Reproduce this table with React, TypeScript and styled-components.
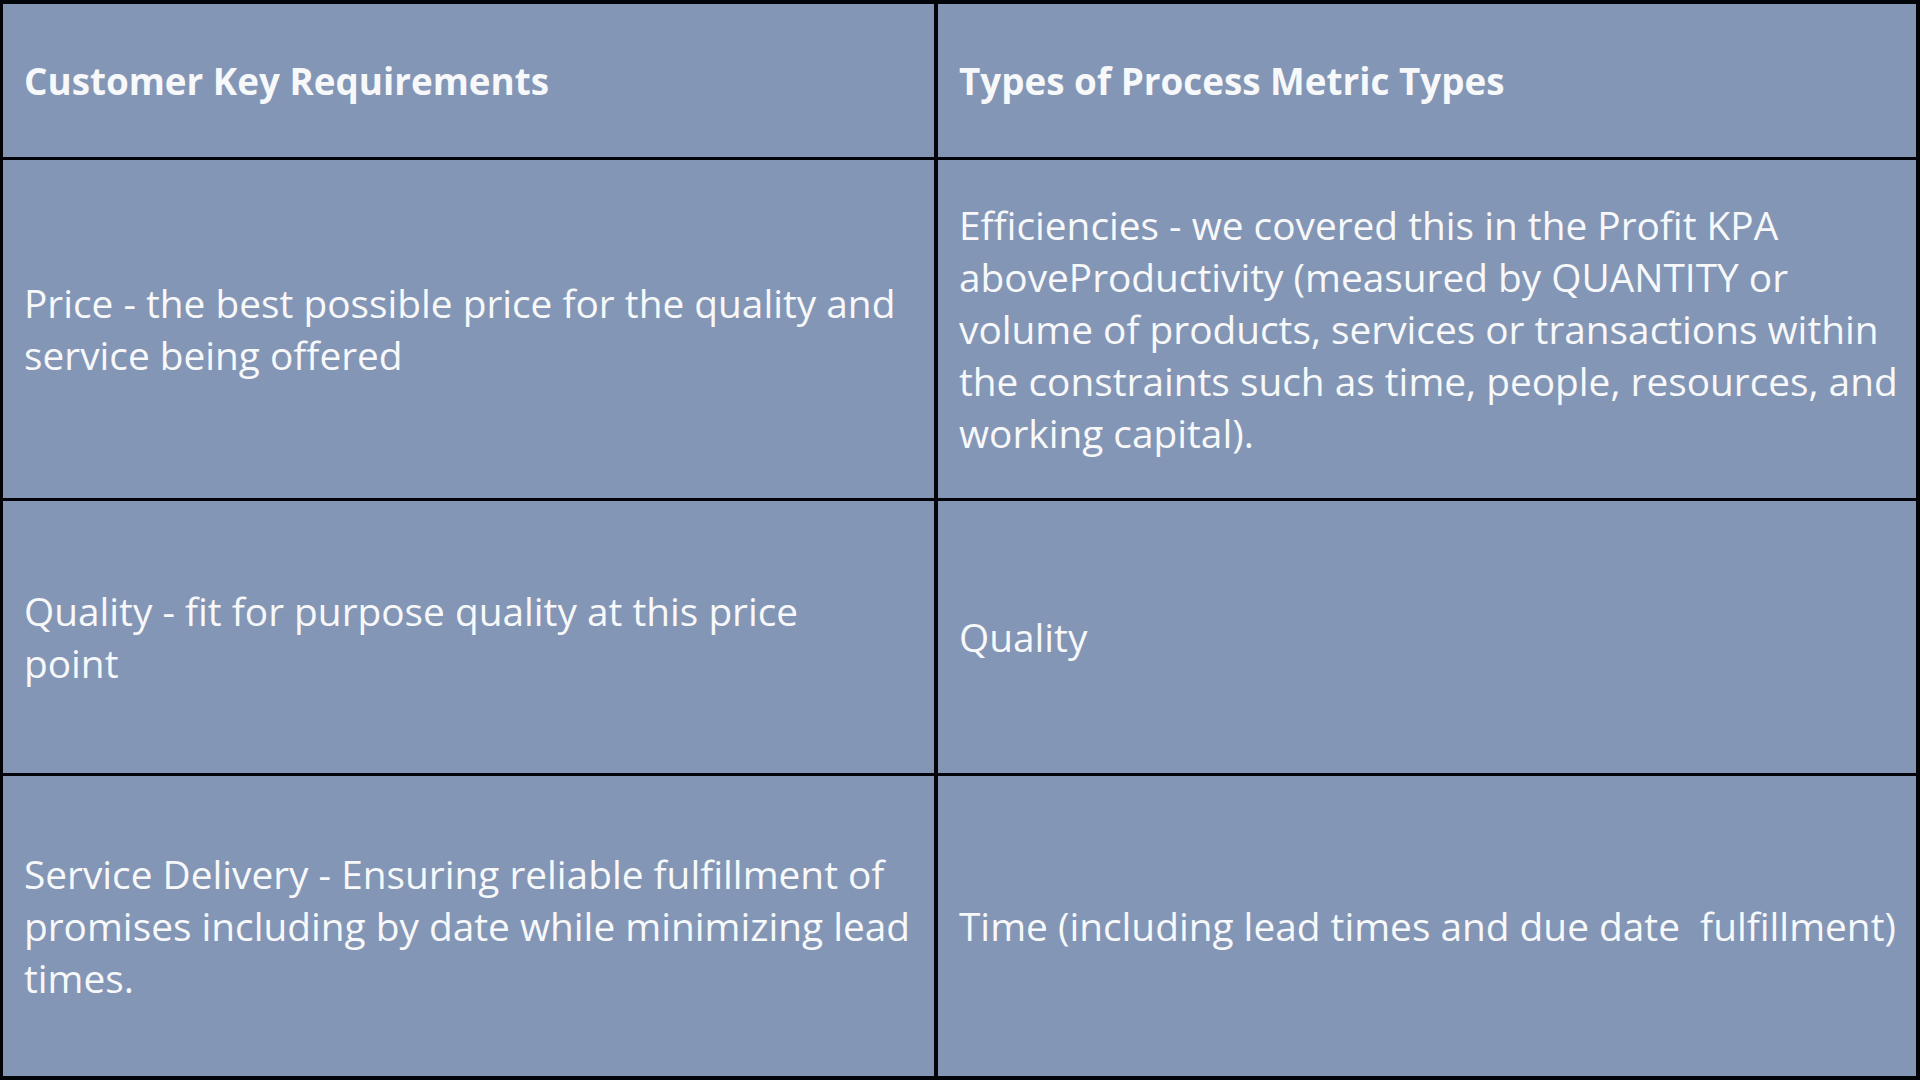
import styled, { createGlobalStyle } from "styled-components";

const GlobalStyle = createGlobalStyle`
  html, body {
    margin: 0;
    padding: 0;
    background: #000;
  }
  * {
    box-sizing: border-box;
  }
`;

const Table = styled.div`
  width: 1920px;
  height: 1080px;
  background-color: #020409;
  padding: 4px 4px 4px 3px;
  display: grid;
  grid-template-columns: 931px 1fr;
  grid-template-rows: 153px 338px 272px 1fr;
  gap: 3px 4px;
`;

const Cell = styled.div<{ $head?: boolean }>`
  background-color: #8496b5;
  color: #f7f8fa;
  display: flex;
  align-items: center;
  padding: 0 10px 0 21px;
  font-family: "Open Sans", "Noto Sans", sans-serif;
  font-size: ${(p) => (p.$head ? "36.8px" : "38.8px")};
  font-weight: ${(p) => (p.$head ? 700 : 400)};
  line-height: 52px;
  white-space: nowrap;
`;

const Text = styled.p`
  margin: 0;
`;

const rows: { left: string[]; right: string[] }[] = [
  {
    left: ["Price - the best possible price for the quality and", "service being offered"],
    right: [
      "Efficiencies - we covered this in the Profit KPA",
      "aboveProductivity (measured by QUANTITY or",
      "volume of products, services or transactions within",
      "the constraints such as time, people, resources, and",
      "working capital).",
    ],
  },
  {
    left: ["Quality - fit for purpose quality at this price", "point"],
    right: ["Quality"],
  },
  {
    left: [
      "Service Delivery - Ensuring reliable fulfillment of",
      "promises including by date while minimizing lead",
      "times.",
    ],
    right: ["Time (including lead times and due date\u00a0 fulfillment)"],
  },
];

function Lines({ lines }: { lines: string[] }) {
  return (
    <Text>
      {lines.map((line, i) => (
        <span key={i}>
          {line}
          {i < lines.length - 1 && <br />}
        </span>
      ))}
    </Text>
  );
}

export default function App() {
  return (
    <>
      <GlobalStyle />
      <Table>
        <Cell $head>
          <Text>Customer Key Requirements</Text>
        </Cell>
        <Cell $head>
          <Text>Types of Process Metric Types</Text>
        </Cell>
        {rows.map((row, i) => [
          <Cell key={`l${i}`}>
            <Lines lines={row.left} />
          </Cell>,
          <Cell key={`r${i}`}>
            <Lines lines={row.right} />
          </Cell>,
        ])}
      </Table>
    </>
  );
}
